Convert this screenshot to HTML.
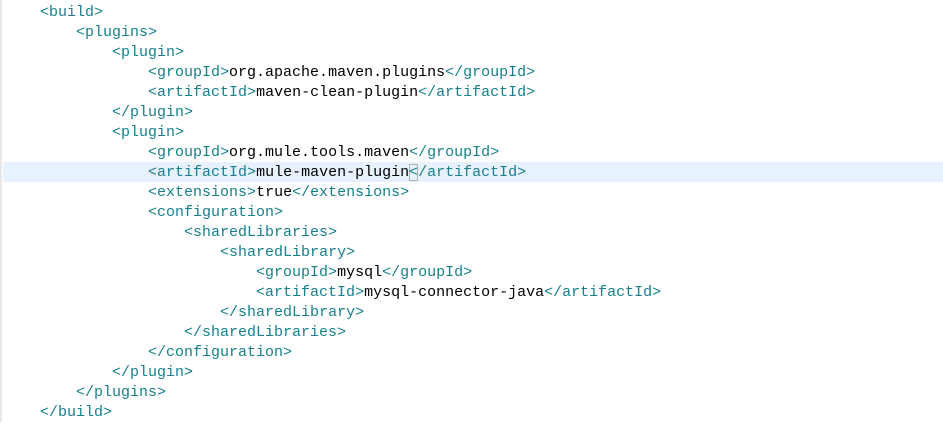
<!DOCTYPE html>
<html><head><style>
html,body{margin:0;padding:0;background:#fff;width:943px;height:422px;overflow:hidden}
.border{position:absolute;left:0;top:0;width:2px;height:422px;background:#e8e8e8}
.hl{position:absolute;left:3px;top:162px;width:940px;height:20px;background:#e8f2fe}
pre{position:absolute;left:4px;top:3px;margin:0;font-family:"Liberation Mono",monospace;font-size:15px;line-height:20px;color:#000}
.t{color:#17808c}
.b{outline:1px solid #b0b0b0;outline-offset:-1px}
</style></head><body>
<div class="border"></div><div class="hl"></div>
<pre>    <span class="t">&lt;build&gt;</span>
        <span class="t">&lt;plugins&gt;</span>
            <span class="t">&lt;plugin&gt;</span>
                <span class="t">&lt;groupId&gt;</span>org.apache.maven.plugins<span class="t">&lt;/groupId&gt;</span>
                <span class="t">&lt;artifactId&gt;</span>maven-clean-plugin<span class="t">&lt;/artifactId&gt;</span>
            <span class="t">&lt;/plugin&gt;</span>
            <span class="t">&lt;plugin&gt;</span>
                <span class="t">&lt;groupId&gt;</span>org.mule.tools.maven<span class="t">&lt;/groupId&gt;</span>
                <span class="t">&lt;artifactId&gt;</span>mule-maven-plugin<span class="t"><span class="b">&lt;</span>/artifactId&gt;</span>
                <span class="t">&lt;extensions&gt;</span>true<span class="t">&lt;/extensions&gt;</span>
                <span class="t">&lt;configuration&gt;</span>
                    <span class="t">&lt;sharedLibraries&gt;</span>
                        <span class="t">&lt;sharedLibrary&gt;</span>
                            <span class="t">&lt;groupId&gt;</span>mysql<span class="t">&lt;/groupId&gt;</span>
                            <span class="t">&lt;artifactId&gt;</span>mysql-connector-java<span class="t">&lt;/artifactId&gt;</span>
                        <span class="t">&lt;/sharedLibrary&gt;</span>
                    <span class="t">&lt;/sharedLibraries&gt;</span>
                <span class="t">&lt;/configuration&gt;</span>
            <span class="t">&lt;/plugin&gt;</span>
        <span class="t">&lt;/plugins&gt;</span>
    <span class="t">&lt;/build&gt;</span></pre>
</body></html>
